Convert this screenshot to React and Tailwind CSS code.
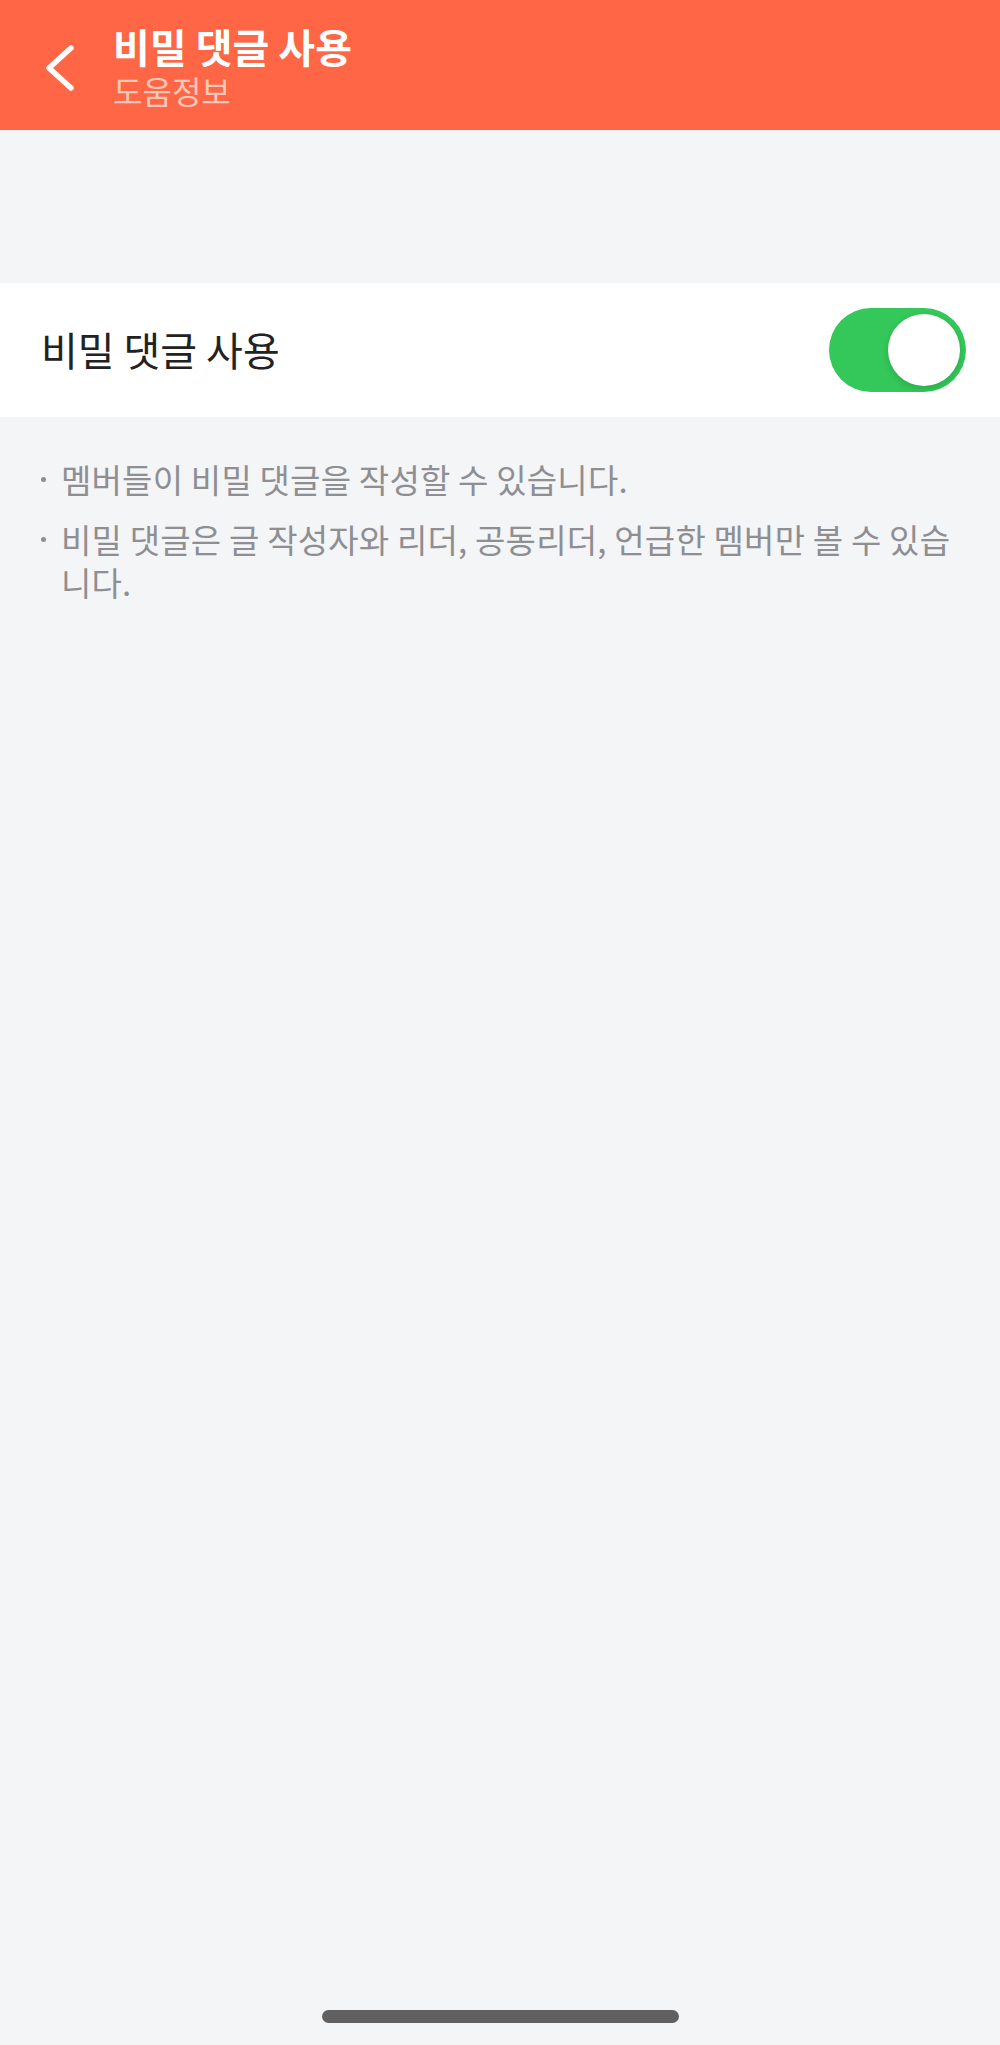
export default function App() {
  const font = { fontFamily: '"Noto Sans CJK KR", "Noto Sans", sans-serif' }

  return (
    <div style={font} className="w-[1000px] h-[2045px] bg-[#f4f5f7] flex flex-col">
      {/* header */}
      <div className="h-[130px] bg-[#ff6645] flex items-center">
        <div className="w-[113px] pl-[45px] flex mt-[6px]">
          <svg width="32" height="48" viewBox="0 0 32 48" fill="none">
            <path d="M26 4 L4 24 L26 44" stroke="#fff" strokeWidth="5.5" strokeLinecap="round" strokeLinejoin="round" />
          </svg>
        </div>
        <div className="flex flex-col mt-[2px]">
          <div className="text-white font-bold text-[40px] leading-[48px]">비밀 댓글 사용</div>
          <div className="text-[#ffc8b8] text-[32px] leading-[40px]">도움정보</div>
        </div>
      </div>

      <div className="h-[153px]" />

      {/* toggle row */}
      <div className="h-[134px] bg-white flex items-center justify-between pl-[41px] pr-[34px]">
        <div className="text-[#222] text-[40px] leading-[48px] -mt-[2px]">비밀 댓글 사용</div>
        <div className="w-[137px] h-[84px] rounded-full bg-[#34c759] flex items-center justify-end pr-[6px]">
          <div className="w-[72px] h-[72px] rounded-full bg-white shadow-[0_3px_6px_rgba(0,0,0,0.15)]" />
        </div>
      </div>

      {/* notes */}
      <div className="pt-[41px] pl-[41px] pr-[30px] flex flex-col gap-[17px] text-[#8e8e93] text-[33px] leading-[43px] tracking-[0.2px]">
        <div className="flex">
          <span className="w-[20px] h-[43px] shrink-0 flex items-center">
            <span className="w-[5px] h-[5px] rounded-full bg-[#8e8e93]" />
          </span>
          <span>멤버들이 비밀 댓글을 작성할 수 있습니다.</span>
        </div>
        <div className="flex">
          <span className="w-[20px] h-[43px] shrink-0 flex items-center">
            <span className="w-[5px] h-[5px] rounded-full bg-[#8e8e93]" />
          </span>
          <span className="flex flex-col">
            <span className="whitespace-nowrap">비밀 댓글은 글 작성자와 리더, 공동리더, 언급한 멤버만 볼 수 있습</span>
            <span>니다.</span>
          </span>
        </div>
      </div>

      <div className="flex-1" />

      {/* home indicator */}
      <div className="h-[35px] flex justify-center">
        <div className="w-[357px] h-[13px] rounded-full bg-[#606060]" />
      </div>
    </div>
  )
}
